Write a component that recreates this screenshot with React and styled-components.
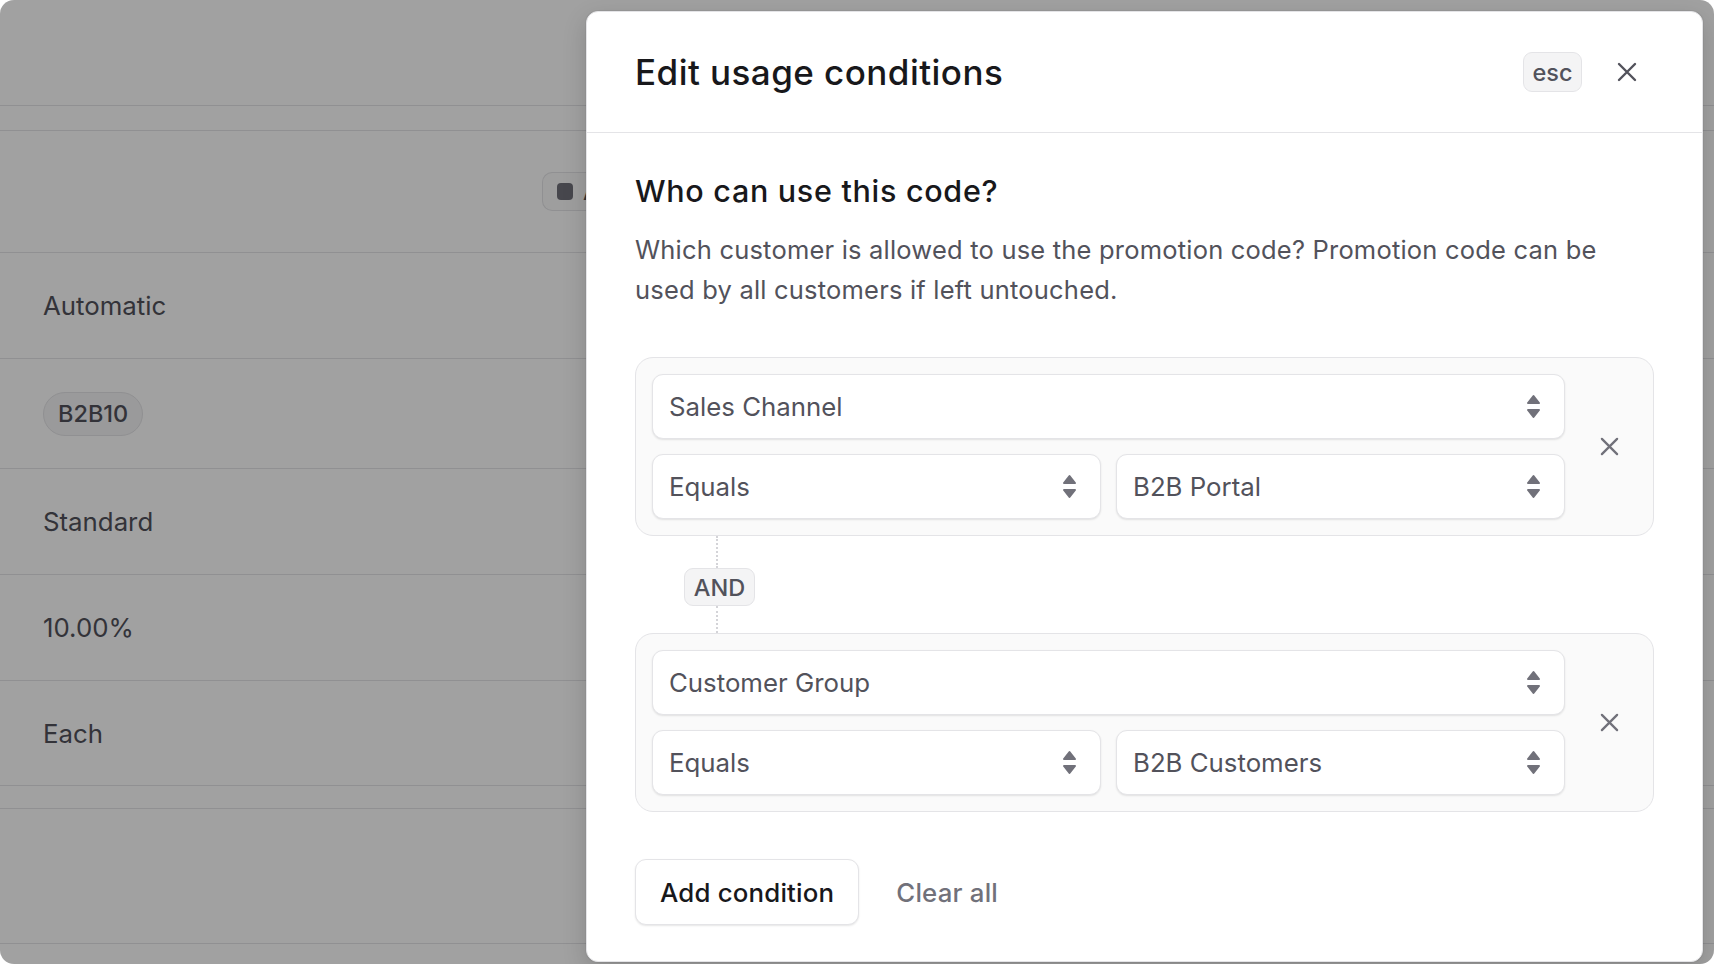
import React from "react";
import styled, { createGlobalStyle } from "styled-components";

const GlobalStyle = createGlobalStyle`
  html, body {
    margin: 0;
    padding: 0;
    background: #ffffff;
  }
  body {
    font-family: Inter, "Noto Sans", "Liberation Sans", sans-serif;
    -webkit-font-smoothing: antialiased;
  }
  * {
    box-sizing: border-box;
  }
`;

const Chevrons = () => (
  <svg width="15" height="25" viewBox="0 0 15 25" fill="#71717a" stroke="#71717a" strokeWidth="2" strokeLinejoin="round">
    <path d="M2 9 L7.5 2 L13 9 Z" />
    <path d="M2 16 L13 16 L7.5 23 Z" />
  </svg>
);

const Cross = ({ size = 20, color = "#52525b" }) => (
  <svg width={size} height={size} viewBox="0 0 20 20" fill="none" stroke={color} strokeWidth="2.4" strokeLinecap="round">
    <path d="M2 2 L18 18 M18 2 L2 18" />
  </svg>
);

const Select = ({ value }) => (
  <SelectBox>
    <span>{value}</span>
    <Chevrons />
  </SelectBox>
);

const ConditionGroup = ({ field, operator, value }) => (
  <Group>
    <Fields>
      <Select value={field} />
      <Pair>
        <Select value={operator} />
        <Select value={value} />
      </Pair>
    </Fields>
    <RemoveCell>
      <IconButton>
        <Cross size={19} color="#71717a" />
      </IconButton>
    </RemoveCell>
  </Group>
);

const rows = [
  { h: 106, content: "Automatic" },
  { h: 110, content: "B2B10", pill: true },
  { h: 106, content: "Standard" },
  { h: 106, content: "10.00%" },
  { h: 105, content: "Each" },
];

const App = () => {
  return (
    <>
      <GlobalStyle />
      <Frame>
        <Page>
          <Band h={106} />
          <Band h={25} />
          <TitleRow>
            <StatusBadge>
              <StatusDot />
              Active
            </StatusBadge>
          </TitleRow>
          {rows.map((r) => (
            <Band key={r.content} h={r.h}>
              {r.pill ? <CodePill>{r.content}</CodePill> : <Value>{r.content}</Value>}
            </Band>
          ))}
          <Band h={23} />
          <Band h={135} />
          <Band h={40}>
            <FooterPill />
          </Band>
        </Page>
        <Overlay />
        <Modal>
          <Header>
            <Title>Edit usage conditions</Title>
            <HeaderActions>
              <Kbd>esc</Kbd>
              <IconButton>
                <Cross size={20} />
              </IconButton>
            </HeaderActions>
          </Header>
          <Body>
            <Heading>Who can use this code?</Heading>
            <Description>
              Which customer is allowed to use the promotion code? Promotion code can be used by all customers if left
              untouched.
            </Description>
            <Conditions>
              <ConditionGroup field="Sales Channel" operator="Equals" value="B2B Portal" />
              <Connector>
                <Dots h={32} />
                <AndBadge>AND</AndBadge>
                <Dots h={27} />
              </Connector>
              <ConditionGroup field="Customer Group" operator="Equals" value="B2B Customers" />
            </Conditions>
            <Actions>
              <SecondaryButton>Add condition</SecondaryButton>
              <TextButton>Clear all</TextButton>
            </Actions>
          </Body>
        </Modal>
      </Frame>
    </>
  );
};

export default App;

const Frame = styled.div`
  position: relative;
  width: 1714px;
  height: 964px;
  border-radius: 14px;
  overflow: hidden;
  background: #ffffff;
`;

const Page = styled.div`
  display: flex;
  flex-direction: column;
  width: 100%;
`;

const Band = styled.div`
  height: ${(p) => p.h}px;
  flex-shrink: 0;
  display: flex;
  align-items: center;
  padding-left: 43px;
  border-bottom: 1px solid #e4e4e7;
`;

const TitleRow = styled.div`
  height: 122px;
  display: flex;
  align-items: center;
  padding-left: 542px;
  border-bottom: 1px solid #e4e4e7;
  overflow: hidden;
`;

const StatusBadge = styled.div`
  display: flex;
  align-items: center;
  gap: 10px;
  height: 39px;
  max-width: 46px;
  overflow: hidden;
  padding: 0 14px;
  border: 1px solid #e4e4e7;
  border-right: none;
  border-radius: 10px 0 0 10px;
  background: #fafafa;
  font-size: 24px;
  font-weight: 500;
  color: #52525b;
  white-space: nowrap;
`;

const StatusDot = styled.span`
  flex-shrink: 0;
  width: 16px;
  height: 17px;
  border-radius: 4px;
  background: #71717a;
`;

const Value = styled.span`
  font-size: 25.8px;
  color: #52525b;
`;

const CodePill = styled.span`
  display: inline-flex;
  align-items: center;
  height: 44px;
  padding: 0 14px;
  border-radius: 22px;
  border: 1px solid #e4e4e7;
  background: #f4f4f5;
  font-size: 23.5px;
  font-weight: 500;
  color: #52525b;
`;

const FooterPill = styled.span`
  margin-top: 38px;
  margin-left: 77px;
  width: 130px;
  height: 20px;
  border-radius: 10px;
  border: 1px solid #e4e4e7;
`;

const Overlay = styled.div`
  position: absolute;
  inset: 0;
  background: rgba(0, 0, 0, 0.37);
`;

const Modal = styled.div`
  position: absolute;
  top: 11px;
  left: 586px;
  right: 11px;
  bottom: 2px;
  display: flex;
  flex-direction: column;
  background: #ffffff;
  border: 1px solid #e4e4e7;
  border-radius: 12px;
  box-shadow: 0 0 0 1px rgba(0, 0, 0, 0.04), 0 8px 24px rgba(0, 0, 0, 0.16);
  overflow: hidden;
`;

const Header = styled.div`
  height: 121px;
  flex-shrink: 0;
  display: flex;
  align-items: center;
  justify-content: space-between;
  padding: 0 50px 0 48px;
  border-bottom: 1px solid #e4e4e7;
`;

const Title = styled.h1`
  margin: 0;
  font-size: 35px;
  font-weight: 500;
  color: #18181b;
  letter-spacing: 0.45px;
`;

const HeaderActions = styled.div`
  display: flex;
  align-items: center;
  gap: 20px;
`;

const Kbd = styled.span`
  display: inline-flex;
  align-items: center;
  justify-content: center;
  width: 59px;
  height: 40px;
  border-radius: 9px;
  border: 1px solid #e4e4e7;
  background: #f4f4f5;
  font-size: 23.5px;
  font-weight: 500;
  color: #52525b;
`;

const IconButton = styled.button`
  display: flex;
  align-items: center;
  justify-content: center;
  width: 50px;
  height: 50px;
  padding: 0;
  border: none;
  background: transparent;
  cursor: pointer;
`;

const Body = styled.div`
  display: flex;
  flex-direction: column;
  padding: 39px 48px 0 48px;
`;

const Heading = styled.h2`
  margin: 0;
  font-size: 30.5px;
  font-weight: 500;
  line-height: 38px;
  letter-spacing: 0.7px;
  color: #18181b;
`;

const Description = styled.p`
  margin: 20px 0 0;
  font-size: 25.5px;
  line-height: 40px;
  letter-spacing: 0.2px;
  color: #52525b;
`;

const Conditions = styled.div`
  display: flex;
  flex-direction: column;
  margin-top: 47px;
`;

const Group = styled.div`
  display: grid;
  grid-template-columns: 1fr 88px;
  padding: 16px 0 16px 16px;
  border: 1px solid #e4e4e7;
  border-radius: 18px;
  background: #fafafa;
`;

const Fields = styled.div`
  display: flex;
  flex-direction: column;
  gap: 15px;
`;

const Pair = styled.div`
  display: grid;
  grid-template-columns: 1fr 1fr;
  gap: 15px;
`;

const SelectBox = styled.div`
  height: 65px;
  display: flex;
  align-items: center;
  justify-content: space-between;
  padding: 0 23px 0 16px;
  background: #ffffff;
  border: 1px solid #e4e4e7;
  border-radius: 11px;
  box-shadow: 0 1px 2px rgba(0, 0, 0, 0.1);
  font-size: 25.8px;
  color: #52525b;
`;

const RemoveCell = styled.div`
  display: flex;
  align-items: center;
  justify-content: center;
`;

const Connector = styled.div`
  display: flex;
  flex-direction: column;
  align-items: flex-start;
  width: 71px;
  margin-left: 49px;
`;

const Dots = styled.div`
  height: ${(p) => p.h}px;
  margin-left: 32px;
  border-left: 2px dotted #d4d4d8;
`;

const AndBadge = styled.span`
  display: flex;
  align-items: center;
  justify-content: center;
  width: 71px;
  height: 38px;
  border-radius: 9px;
  border: 1px solid #e4e4e7;
  background: #f4f4f5;
  font-size: 23.5px;
  font-weight: 500;
  color: #52525b;
`;

const Actions = styled.div`
  display: flex;
  align-items: center;
  gap: 15px;
  margin-top: 47px;
`;

const SecondaryButton = styled.button`
  height: 66px;
  padding: 0 24px;
  border: 1px solid #e4e4e7;
  border-radius: 11px;
  background: #ffffff;
  box-shadow: 0 1px 2px rgba(0, 0, 0, 0.1);
  font-family: inherit;
  font-size: 25.8px;
  font-weight: 500;
  letter-spacing: 0.2px;
  color: #18181b;
  cursor: pointer;
`;

const TextButton = styled.button`
  height: 66px;
  padding: 0 22px;
  border: none;
  background: transparent;
  font-family: inherit;
  font-size: 25.8px;
  font-weight: 500;
  letter-spacing: 0.2px;
  color: #71717a;
  cursor: pointer;
`;
